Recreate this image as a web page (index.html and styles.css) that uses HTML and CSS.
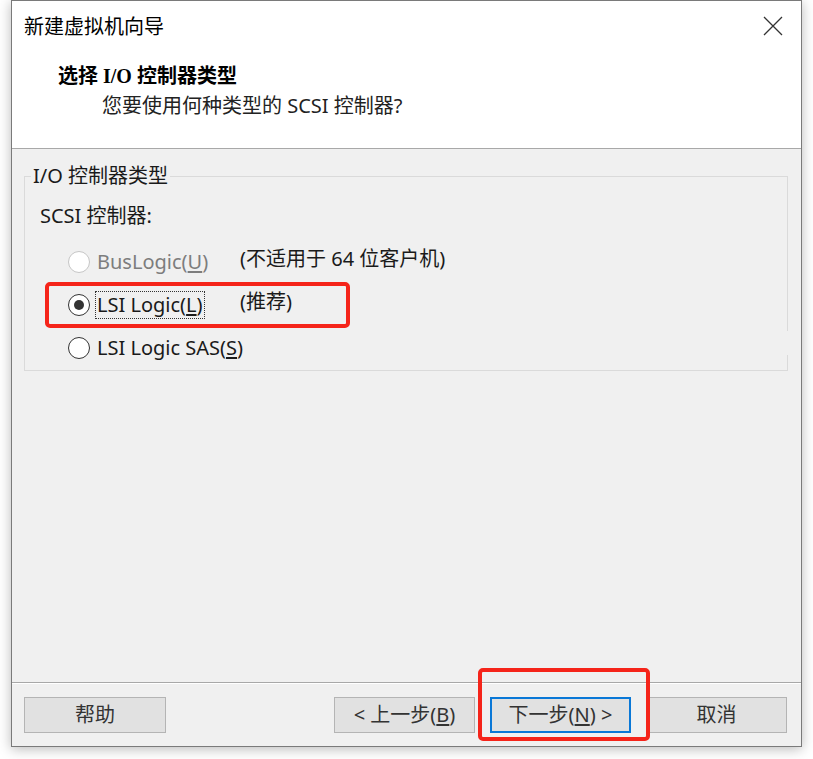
FILE: index.html
```html
<!DOCTYPE html>
<html lang="zh-CN">
<head>
<meta charset="utf-8">
<title>新建虚拟机向导</title>
<link rel="stylesheet" href="styles.css">
</head>
<body>
<div class="window">
  <header class="header">
    <div class="titlebar">
      <span class="title">新建虚拟机向导</span>
      <svg class="close" width="20" height="20" viewBox="0 0 20 20"><path d="M1 1L19 19M19 1L1 19" stroke="#333" stroke-width="1.3" fill="none"/></svg>
    </div>
    <h1 class="heading">选择 I/O 控制器类型</h1>
    <p class="subtitle">您要使用何种类型的 SCSI 控制器?</p>
  </header>
  <main class="body">
    <fieldset class="group">
      <legend class="legend">I/O 控制器类型</legend>
      <div class="group-inner">
        <div class="label">SCSI 控制器:</div>
        <div class="row">
          <div class="choice disabled"><span class="radio"></span><span class="text">BusLogic(<u>U</u>)</span></div>
          <span class="note">(不适用于 64 位客户机)</span>
        </div>
        <div class="row">
          <div class="choice"><span class="radio checked"></span><span class="text focus">LSI Logic(<u>L</u>)</span></div>
          <span class="note">(推荐)</span>
        </div>
        <div class="row">
          <div class="choice"><span class="radio"></span><span class="text">LSI Logic SAS(<u>S</u>)</span></div>
        </div>
      </div>
    </fieldset>
    <div class="gap-mask"></div>
  </main>
  <footer class="footer">
    <button class="btn">帮助</button>
    <div class="spacer"></div>
    <button class="btn">&lt; 上一步(<u>B</u>)</button>
    <button class="btn default">下一步(<u>N</u>) &gt;</button>
    <button class="btn">取消</button>
  </footer>
</div>
<div class="mark mark-radio"></div>
<div class="mark mark-next"></div>
</body>
</html>
```
FILE: styles.css
```css
html, body {
  margin: 0;
  padding: 0;
  background: #ffffff;
}
body {
  font-family: "Noto Sans", "Noto Sans CJK SC", sans-serif;
  font-size: 20px;
  color: #1a1a1a;
  position: relative;
  width: 813px;
  height: 759px;
  overflow: hidden;
}
.window {
  margin-left: 11px;
  width: 789px;
  height: 745px;
  border: 1px solid #7a7a7a;
  background: #f0f0f0;
  box-shadow: 0 2px 12px rgba(0,0,0,0.28);
  display: flex;
  flex-direction: column;
}
.header {
  background: #ffffff;
  border-bottom: 1px solid #a8a8a8;
  box-sizing: border-box;
  height: 148px;
  padding-top: 12px;
}
.titlebar {
  display: flex;
  justify-content: space-between;
  align-items: center;
  height: 28px;
  padding-left: 12px;
  padding-right: 18px;
}
.title {
  line-height: 28px;
  color: #000;
}
.close {
  display: block;
  margin-top: -2px;
}
.heading {
  margin: 21px 0 0 46px;
  font-family: "Liberation Serif", "Noto Sans CJK SC", serif;
  font-weight: bold;
  font-size: 20px;
  line-height: 28px;
  color: #000;
}
.subtitle {
  margin: 2px 0 0 90px;
  line-height: 28px;
  color: #222;
}
.body {
  flex: 1;
  padding: 15px 13px 0 12px;
  position: relative;
}
.group {
  margin: 0;
  padding: 0;
  border: 1px solid #dadada;
  min-width: 0;
}
.legend {
  margin-left: 6px;
  padding: 0 2px;
  line-height: 24px;
  color: #1a1a1a;
}
.group-inner {
  padding: 14px 0 1px 15px;
}
.label {
  line-height: 28px;
  margin-bottom: 10px;
}
.row {
  display: flex;
  align-items: center;
  height: 43px;
  padding-left: 28px;
}
.choice {
  width: 172px;
  display: flex;
  align-items: center;
}
.radio {
  width: 20px;
  height: 20px;
  border: 1px solid #333;
  border-radius: 50%;
  background: #fff;
  box-sizing: content-box;
  margin-right: 6px;
  display: flex;
  align-items: center;
  justify-content: center;
  flex: none;
}
.radio.checked::after {
  content: "";
  width: 10px;
  height: 10px;
  border-radius: 50%;
  background: #333;
}
.disabled .radio {
  border-color: #c6c6c6;
}
.disabled .text {
  color: #7d7d7d;
}
.text {
  line-height: 26px;
  padding: 0 1px;
  white-space: nowrap;
}
.text.focus {
  outline: 1px dotted #333;
  outline-offset: 0;
}
u {
  text-underline-offset: 2px;
}
.note {
  line-height: 26px;
  margin-top: -5px;
}
.gap-mask {
  position: absolute;
  left: 774px;
  top: 182px;
  width: 3px;
  height: 24px;
  background: #f0f0f0;
}
.footer {
  height: 64px;
  box-sizing: border-box;
  border-top: 1px solid #a8a8a8;
  box-shadow: inset 0 1px 0 #ffffff;
  display: flex;
  align-items: flex-start;
  padding: 14px 14px 0 12px;
  gap: 15px;
}
.spacer {
  flex: 1;
}
.btn {
  width: 141px;
  height: 36px;
  box-sizing: border-box;
  border: 1px solid #b4b4b4;
  background: #e1e1e1;
  font-family: "Noto Sans", "Noto Sans CJK SC", sans-serif;
  font-size: 20px;
  color: #333;
  padding: 0;
  line-height: 30px;
}
.btn:first-child {
  width: 142px;
}
.btn.default {
  border: 2px solid #0a78d7;
}
.mark {
  position: absolute;
  border: 4px solid #f5241a;
  border-radius: 5px;
  box-sizing: border-box;
}
.mark-radio {
  left: 45px;
  top: 282px;
  width: 305px;
  height: 46px;
}
.mark-next {
  left: 478px;
  top: 668px;
  width: 172px;
  height: 73px;
}
```
